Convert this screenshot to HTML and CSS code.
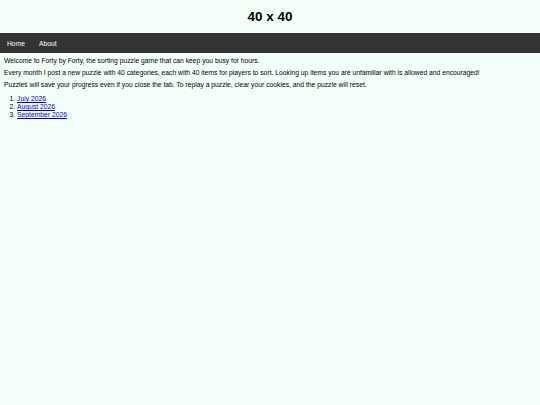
FILE: index.html
```html
<!DOCTYPE html>
<html>
<head>
<meta charset="utf-8">
<title>40 x 40</title>
<link rel="stylesheet" href="styles.css">
</head>
<body>
<header class="site-header">
  <h1 class="title">40 x 40</h1>
</header>
<nav class="nav">
  <a class="nav-link" href="#">Home</a>
  <a class="nav-link" href="#">About</a>
</nav>
<main class="content">
  <p class="para">Welcome to Forty by Forty, the sorting puzzle game that can keep you busy for hours.</p>
  <p class="para">Every month I post a new puzzle with 40 categories, each with 40 items for players to sort. Looking up items you are unfamiliar with is allowed and encouraged!</p>
  <p class="para">Puzzles will save your progress even if you close the tab. To replay a puzzle, clear your cookies, and the puzzle will reset.</p>
  <ol class="puzzles">
    <li><a href="#">July 2026</a></li>
    <li><a href="#">August 2026</a></li>
    <li><a href="#">September 2026</a></li>
  </ol>
</main>
</body>
</html>
```
FILE: styles.css
```css
html, body {
  margin: 0;
  padding: 0;
}
body {
  background: #f5fffa;
  font-family: "Liberation Sans", Arial, sans-serif;
  color: #000;
  min-height: 405px;
}
.site-header {
  height: 33px;
  display: flex;
  align-items: center;
  justify-content: center;
}
.title {
  margin: 0;
  font-size: 13.5px;
  font-weight: bold;
}
.nav {
  background: #333;
  height: 20px;
  display: flex;
  align-items: center;
  padding-left: 7px;
  gap: 14px;
}
.nav-link {
  color: #fff;
  text-decoration: none;
  font-size: 6.75px;
}
.content {
  padding: 2px 4px;
  font-size: 6.75px;
}
.para {
  margin: 0;
  line-height: 12px;
}
.puzzles {
  margin: 4px 0 0;
  padding-left: 13px;
  line-height: 8px;
}
.puzzles a {
  color: #00e;
}
```
